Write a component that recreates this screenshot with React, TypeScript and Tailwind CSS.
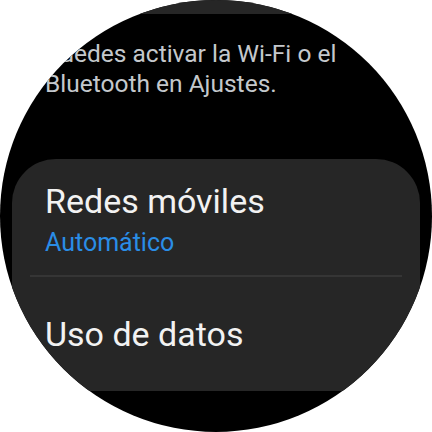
import React from "react";

export default function App() {
  return (
    <div className="w-[432px] h-[432px] bg-white">
      <div
        className="w-[432px] h-[432px] rounded-full overflow-hidden bg-black flex flex-col"
        style={{ fontFamily: "Roboto, 'Noto Sans', sans-serif" }}
      >
        <div className="h-[14px] shrink-0 mx-[12px] bg-[#262626]" />
        <div className="mt-[25px] pl-[45px] pr-[10px] text-[24.5px] leading-[30px] text-[#c4c8cc] whitespace-nowrap">
          <div>Puedes activar la Wi-Fi o el</div>
          <div>Bluetooth en Ajustes.</div>
        </div>
        <div className="mt-[60px] mx-[12px] rounded-t-[44px] bg-[#262626] flex flex-col">
          <div className="pt-[22px] pl-[33px]">
            <div className="text-[34px] leading-[40px] text-[#f2f2f2] whitespace-nowrap">Redes móviles</div>
            <div className="mt-[7px] text-[25px] leading-[30px] text-[#2a8de6] whitespace-nowrap">Automático</div>
          </div>
          <div className="mt-[17px] mx-[18px] h-[2px] bg-[#353535]" />
          <div className="pt-[37px] pb-[37px] pl-[33px] text-[34px] leading-[40px] text-[#f2f2f2] whitespace-nowrap">
            Uso de datos
          </div>
        </div>
      </div>
    </div>
  );
}
